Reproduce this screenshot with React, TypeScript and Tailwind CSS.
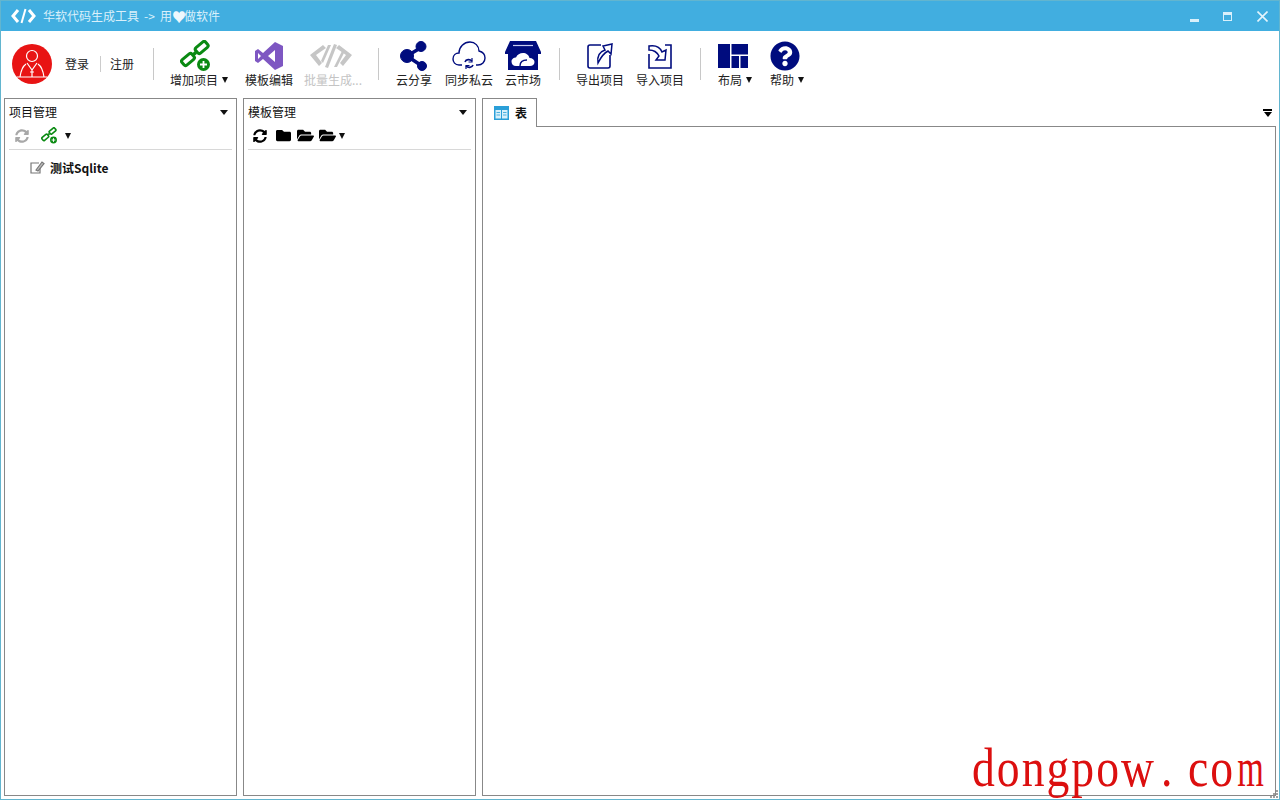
import React from "react";
import { FaFolder, FaFolderOpen, FaQuestionCircle, FaSyncAlt } from "react-icons/fa";

const NAVY = "#000c7e";

function Link({ size, color, badge }: { size: number; color: string; badge?: boolean }) {
  return (
    <svg width={size} height={size} viewBox="0 0 32 32" fill="none">
      <g stroke={color} strokeWidth="3" fill="#fff">
        <rect x="1.5" y="16" width="13" height="7" rx="2" transform="rotate(-40 8 19.5)" />
        <rect x="15.2" y="4" width="13" height="7" rx="2" transform="rotate(-40 21.7 7.5)" />
      </g>
      <path d="M13.5 14.5 L16 12.4" stroke={color} strokeWidth="3.5" />
      {badge && (
        <>
          <circle cx="23.5" cy="24.5" r="6.5" fill={color} />
          <path d="M23.5 21v7M20 24.5h7" stroke="#fff" strokeWidth="1.8" />
        </>
      )}
    </svg>
  );
}

function Avatar() {
  return (
    <div className="w-10 h-10 rounded-full bg-[#e81414] flex items-center justify-center shrink-0">
      <svg width="34" height="34" viewBox="0 0 34 34" fill="none" stroke="#fff" strokeWidth="1.2">
        <circle cx="17" cy="9" r="5.5" />
        <path d="M11 17 C8 19 6 23 5 30 M23 17 C26 19 28 23 29 30 M2 30 H32 M12 16 L17 23 L22 16 M17 23 V30 M15 25 h4" />
      </svg>
    </div>
  );
}

const VS = (
  <svg width="30" height="30" viewBox="0 0 30 30">
    <path d="M21 1 L29 5 V25 L21 29 L9 18 L4 22 L1 20 V10 L4 8 L9 12 Z M21 9 L14 15 L21 21 Z M4 12 V18 L7 15 Z" fill="#7e57c2" fillRule="evenodd" />
  </svg>
);

const Batch = (
  <svg width="46" height="28" viewBox="0 0 46 28" fill="#c6c6c6">
    <path d="M15 3 L2 13 L11 24 L14 21 L8 13 L18 6 Z" />
    <path d="M31 3 L44 13 L35 24 L32 21 L38 13 L28 6 Z" />
    <path d="M26 2 L29 3 L20 26 L17 25 Z" />
    <path d="M20 3 L23 3 L15 21 L13 19 Z" />
    <path d="M34 9 L36 11 L29 25 L26 25 Z" />
  </svg>
);

const Share = (
  <svg width="28" height="30" viewBox="0 0 28 30" fill={NAVY} stroke={NAVY}>
    <path d="M7 15 L22 6 M7 15 L22 25" strokeWidth="3.5" />
    <circle cx="7" cy="15" r="6.5" />
    <circle cx="21" cy="5.5" r="5" />
    <circle cx="22" cy="25" r="4.5" />
  </svg>
);

const CloudSync = (
  <svg width="34" height="30" viewBox="0 0 34 30" fill="none" stroke={NAVY} strokeWidth="1.4">
    <path d="M10 24 H7 C3 24 1 21 1 18 C1 14 4 12 7 12 C7 6 12 1 18 1 C23 1 27 5 27 10 C31 11 33 14 33 17 C33 21 30 24 26 24 H24" />
    <path d="M13 21 C14 18 18 18 20 20 M21 24 C20 27 16 27 14 25" strokeWidth="1.6" />
    <path d="M20 17 V21 H16.5 M14 28 V24.5 H17.5" strokeWidth="1.2" />
  </svg>
);

const Store = (
  <svg width="36" height="30" viewBox="0 0 36 30">
    <path d="M5 0 H31 L36 11 V13 H33 V29 H3 V13 H0 V11 Z" fill={NAVY} />
    <path d="M8 4.5 H28" stroke="#c9cdf0" strokeWidth="1.2" />
    <path d="M11 25 C8 25 6.5 23 6.5 20.5 C6.5 18 9 16.5 11 16.5 C12 13.5 15 12 18 12 C21 12 24 14 24.5 17 C27.5 17 29.5 19 29.5 21 C29.5 23.5 27.5 25 25 25 Z" fill="#fff" />
    <path d="M15 25 C15 21 18 19 22 19" stroke={NAVY} strokeWidth="1.4" fill="none" />
  </svg>
);

const Export = (
  <svg width="28" height="28" viewBox="0 0 28 28" fill="none" stroke={NAVY}>
    <path d="M15 3 H4 C2.5 3 2 3.5 2 5 V24 C2 25.5 2.5 26 4 26 H22 C23.5 26 24 25.5 24 24 V13" strokeWidth="1.6" />
    <path d="M12 21 C11 15 13 10 19 8 L17 4 L26 2 L25 12 L22 9 C18 11 15 15 12 21 Z" fill="#fff" strokeWidth="1.5" />
  </svg>
);

const Import = (
  <svg width="28" height="28" viewBox="0 0 28 28" fill="none" stroke={NAVY}>
    <path d="M3 12 V26 H25 V3 H19" strokeWidth="1.6" />
    <path d="M3 4 C9 3 14 5 16 10 L20 8 L19 18 L10 18 L13 14 C11 10 7 8 3 8 Z" fill="#fff" strokeWidth="1.5" />
  </svg>
);

const LayoutIcon = (
  <svg width="30" height="24" viewBox="0 0 30 24" fill={NAVY}>
    <rect x="0" y="0" width="12" height="24" />
    <rect x="13.5" y="0" width="16.5" height="10.5" />
    <rect x="13.5" y="12" width="7.5" height="12" />
    <rect x="22.5" y="12" width="7.5" height="12" />
  </svg>
);

function Sep({ ml, mr }: { ml: string; mr: string }) {
  return <div className={`w-px h-8 bg-[#c8c8c8] self-center ${ml} ${mr}`} />;
}

function Tool({ w, icon, label, arrow, muted, shift }: { w: string; icon: React.ReactNode; label: string; arrow?: boolean; muted?: boolean; shift?: string }) {
  return (
    <div className={`${w} flex flex-col items-center shrink-0`}>
      <div className={`h-[32px] flex items-center justify-center ${shift ?? ""}`}>{icon}</div>
      <div className={`h-[16px] leading-[16px] whitespace-nowrap flex items-center ${muted ? "text-[#c4c4c4]" : "text-[#222]"}`}>
        {label}
        {arrow && <span className="ml-[4px] w-0 h-0 border-x-[3.5px] border-x-transparent border-t-[6px] border-t-[#111]" />}
      </div>
    </div>
  );
}

function PanelHeader({ title }: { title: string }) {
  return (
    <div className="flex items-center justify-between h-[26px] pl-[4px] pr-[8px] text-[#111]">
      <span>{title}</span>
      <span className="w-0 h-0 border-x-[4.5px] border-x-transparent border-t-[5px] border-t-[#111]" />
    </div>
  );
}

function MiniArrow() {
  return <span className="block w-0 h-0 border-x-[3.5px] border-x-transparent border-t-[6px] border-t-[#111]" />;
}

export default function App() {
  return (
    <div className="w-[1280px] h-[800px] overflow-hidden relative bg-white flex flex-col border border-[#62b5cf] text-[12px] font-['Noto_Sans_CJK_SC','Microsoft_YaHei',sans-serif]">
      {/* Title bar */}
      <div className="h-[30px] shrink-0 bg-[#41aee0] flex items-center pl-[10px] text-[#d9f0fb]">
        <svg width="25" height="16" viewBox="0 0 25 16" fill="none" stroke="#fff" strokeWidth="3">
          <path d="M7 2 L2 8 L7 14" />
          <path d="M18 2 L23 8 L18 14" />
          <path d="M14.5 1 L10.5 15" strokeWidth="2" />
        </svg>
        <span className="ml-[7px] leading-none flex items-center whitespace-pre">
          华软代码生成工具<span className="w-[21px] text-center">-&gt;</span>用<span className="w-[12px] text-center text-[14px] text-[#eef8fd]">♥</span>做软件
        </span>
        <div className="ml-auto flex items-center text-[#d9f0fb]">
          <div className="w-[9px] h-[3px] bg-[#d9f0fb] mt-[9px]" />
          <div className="w-[9px] h-[9px] border border-[#d9f0fb] border-t-[3px] ml-[24px]" />
          <svg className="ml-[25px] mr-[11px]" width="11" height="11" viewBox="0 0 11 11" stroke="#e3f4fc" strokeWidth="1.6">
            <path d="M0.5 0.5 L10.5 10.5 M10.5 0.5 L0.5 10.5" />
          </svg>
        </div>
      </div>

      {/* Toolbar */}
      <div className="h-[67px] shrink-0 flex items-center pl-[11px] pb-[2px]">
        <Avatar />
        <span className="ml-[13px] text-[#222]">登录</span>
        <div className="ml-[11px] w-px h-[16px] bg-[#ccc]" />
        <span className="ml-[9px] text-[#222]">注册</span>
        <Sep ml="ml-[19px]" mr="mr-[13px]" />
        <Tool w="w-[64px]" icon={<Link size={32} color="#0a8a12" badge />} label="增加项目" arrow shift="mr-[6px]" />
        <div className="w-[10px]" />
        <Tool w="w-[56px]" icon={VS} label="模板编辑" />
        <div className="w-[4px]" />
        <Tool w="w-[64px]" icon={Batch} label="批量生成..." muted shift="mr-[4px]" />
        <Sep ml="ml-[13px]" mr="mr-[9px]" />
        <Tool w="w-[52px]" icon={Share} label="云分享" />
        <div className="w-[1px]" />
        <Tool w="w-[56px]" icon={CloudSync} label="同步私云" />
        <div className="w-[1px]" />
        <Tool w="w-[50px]" icon={Store} label="云市场" />
        <Sep ml="ml-[11px]" mr="mr-[12px]" />
        <Tool w="w-[56px]" icon={Export} label="导出项目" />
        <div className="w-[4px]" />
        <Tool w="w-[56px]" icon={Import} label="导入项目" />
        <Sep ml="ml-[12px]" mr="mr-[10px]" />
        <Tool w="w-[48px]" icon={LayoutIcon} label="布局" arrow shift="mr-[4px]" />
        <div className="w-[4px]" />
        <Tool w="w-[48px]" icon={<FaQuestionCircle size={30} color={NAVY} />} label="帮助" arrow shift="mr-[4px]" />
      </div>

      {/* Panels */}
      <div className="flex-1 flex pl-[3px] pr-[3px] pb-[3px] gap-[6px] min-h-0">
        <div className="w-[233px] shrink-0 border border-[#888] flex flex-col">
          <PanelHeader title="项目管理" />
          <div className="mx-[4px] h-[21px] pb-[3px] border-b border-[#d8d8d8] flex items-center box-content">
            <FaSyncAlt size={14} color="#a8a8a8" className="ml-[6px]" />
            <div className="ml-[12px] mr-[7px]"><Link size={17} color="#0a8a12" badge /></div>
            <MiniArrow />
          </div>
          <div className="flex items-center pl-[25px] mt-[9px] h-[18px]">
            <svg width="15" height="14" viewBox="0 0 15 14" fill="none" stroke="#777" strokeWidth="1.2">
              <path d="M9 2 H1 V12 H10 V7" />
              <path d="M6 9 L12 1 L14 2.5 L8 10 Z" fill="#bbb" />
            </svg>
            <span className="ml-[5px] font-bold text-[#111]">测试Sqlite</span>
          </div>
        </div>

        <div className="w-[233px] shrink-0 border border-[#888] flex flex-col">
          <PanelHeader title="模板管理" />
          <div className="mx-[4px] h-[21px] pb-[3px] border-b border-[#d8d8d8] flex items-center box-content">
            <FaSyncAlt size={14} color="#000" className="ml-[5px]" />
            <FaFolder size={15} color="#000" className="ml-[9px]" />
            <FaFolderOpen size={17} color="#000" className="ml-[6px]" />
            <FaFolderOpen size={17} color="#000" className="ml-[5px]" />
            <span className="ml-[3px]"><MiniArrow /></span>
          </div>
        </div>

        <div className="flex-1 min-w-0 flex flex-col">
          <div className="h-[29px] shrink-0 flex">
            <div className="w-[55px] h-[29px] border border-b-0 border-[#888] bg-white flex items-center pl-[11px] relative z-10 font-bold">
              <svg width="15" height="14" viewBox="0 0 15 14">
                <rect x="0" y="0" width="15" height="14" fill="#2a9fd8" />
                <path d="M1.5 4 H7 V12.5 H1.5 Z M8 4 H13.5 V12.5 H8 Z" fill="#d8f0fa" />
                <path d="M2.5 6.5 H6 M2.5 9 H6 M9 6.5 H12.5 M9 9 H12.5" stroke="#2a9fd8" strokeWidth="0.8" />
              </svg>
              <span className="ml-[6px] text-[#111]">表</span>
            </div>
            <div className="flex-1 border-b border-[#888] flex items-start justify-end pr-[4px] pt-[11px] h-[29px]">
              <div className="flex flex-col items-center gap-[1px]">
                <div className="w-[9px] h-[2px] bg-black" />
                <div className="w-0 h-0 border-x-[4.5px] border-x-transparent border-t-[5px] border-t-black" />
              </div>
            </div>
          </div>
          <div className="flex-1 border border-t-0 border-[#888]" />
        </div>
      </div>

      {/* Size grip */}
      <svg className="absolute right-0 bottom-0" width="9" height="9" viewBox="0 0 9 9" fill="#a0a0a0">
        <rect x="6" y="0" width="2" height="2" />
        <rect x="3" y="3" width="2" height="2" />
        <rect x="6" y="3" width="2" height="2" />
        <rect x="0" y="6" width="2" height="2" />
        <rect x="3" y="6" width="2" height="2" />
        <rect x="6" y="6" width="2" height="2" />
      </svg>

      {/* Watermark */}
      <div className="absolute left-[971px] top-[736px] origin-left scale-x-[0.845] text-[54px] leading-[62px] tracking-[2.4px] [word-spacing:0px] text-[#dc0f0f] whitespace-pre font-['Liberation_Serif',serif]">
        dongpow<span className="ml-[6px]">.</span> co<span className="inline-block origin-left scale-x-[0.75] ml-[3px]">m</span>
      </div>
    </div>
  );
}
